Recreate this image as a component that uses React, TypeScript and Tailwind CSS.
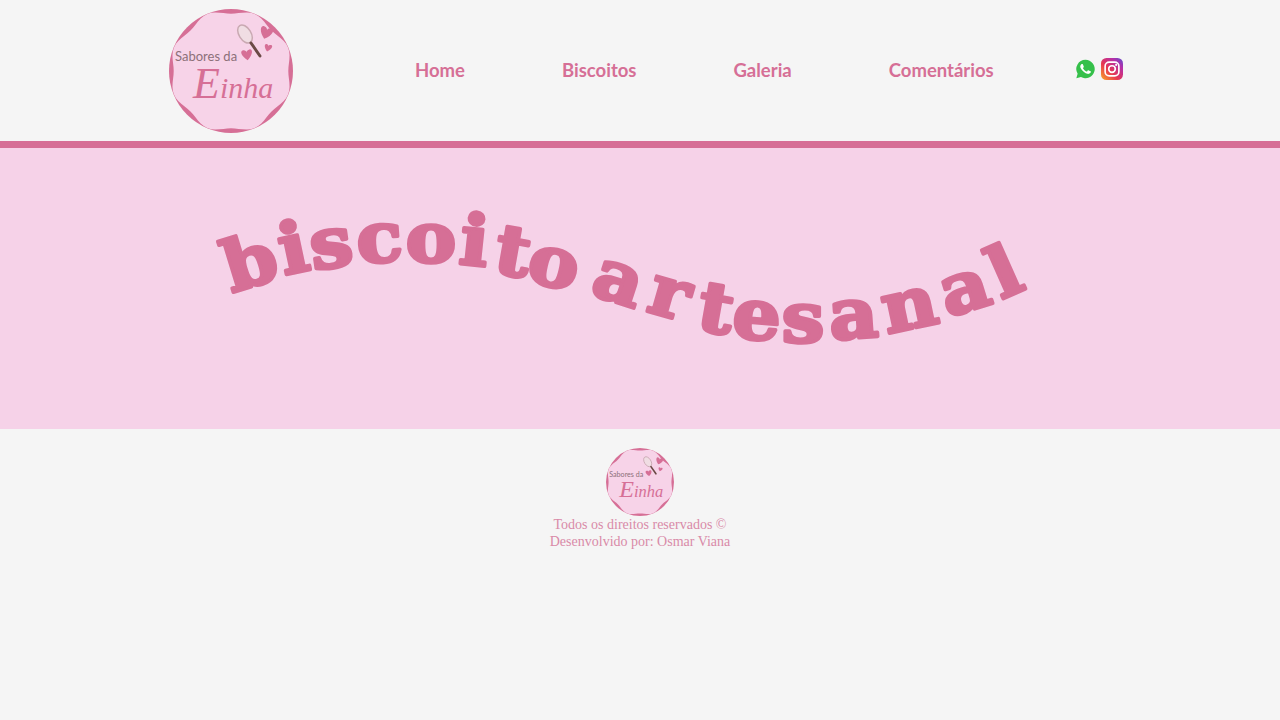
const NAV = ['Home', 'Biscoitos', 'Galeria', 'Comentários'];

// letter placement along the wave: char, x, baseline y, rotation
const LETTERS: [string, number, number, number][] = [
  ['b', 257, 285, -17],
  ['i', 298, 272, -12],
  ['s', 334, 267, -8],
  ['c', 381, 262, -4],
  ['o', 431, 262, 0],
  ['i', 472, 265, 6],
  ['t', 509, 275, 10],
  ['o', 549, 286, 13],
  ['a', 612, 301, 18],
  ['r', 664, 316, 16],
  ['t', 712, 332, 10],
  ['e', 755, 339, 5],
  ['s', 803, 342, 0],
  ['a', 855, 338, -4],
  ['n', 914, 328, -12],
  ['a', 971, 310, -17],
  ['l', 1014, 294, -24],
];

const scallop = Array.from({ length: 96 }, (_, i) => {
  const t = (i / 96) * Math.PI * 2;
  const r = 59.5 - 2.2 * Math.cos(8 * t);
  return `${(62 + r * Math.cos(t)).toFixed(2)},${(62 + r * Math.sin(t)).toFixed(2)}`;
}).join(' ');

const Heart = ({ x, y, s, r = 0 }: { x: number; y: number; s: number; r?: number }) => (
  <path
    transform={`translate(${x} ${y}) rotate(${r}) scale(${s})`}
    d="M0 4C-5 0-5-4-2.500-4-1-4 0-3 0-2 0-3 1-4 2.500-4 5-4 5 0 0 4z"
    fill="#d66f96"
  />
);

const Logo = ({ size }: { size: number }) => (
  <svg width={size} height={size} viewBox="0 0 124 124" className="block">
    <circle cx="62" cy="62" r="62" fill="#d66f96" />
    <polygon points={scallop} fill="#f7d3e8" />
    <ellipse cx="76" cy="25" rx="6" ry="10" transform="rotate(-32 76 25)" fill="#f0dde3" stroke="#c9a9b2" strokeWidth="1.500" />
    <line x1="82" y1="34" x2="91" y2="47" stroke="#6b4a46" strokeWidth="3" strokeLinecap="round" />
    <Heart x={78} y={46} s={1.300} r={-8} />
    <Heart x={97} y={24} s={1.500} r={18} />
    <Heart x={99} y={39} s={0.900} r={15} />
    <text x="6" y="52" fontFamily="'Lato', sans-serif" fontSize="13" fill="#8c7079">Sabores da</text>
    <text x="24" y="89" fontFamily="'Liberation Serif', serif" fontStyle="italic" fontSize="30" fill="#d66f96">
      <tspan fontSize="44">E</tspan>inha
    </text>
  </svg>
);

const WhatsApp = () => (
  <svg width="21" height="22" viewBox="0 0 24 24" className="block">
    <path d="M12 1.500a10.500 10.500 0 0 0-9 15.900L1.500 22.500l5.300-1.400A10.500 10.500 0 1 0 12 1.500z" fill="#35c04a" />
    <path
      fill="#fff"
      d="M17.472 14.382c-.297-.149-1.758-.867-2.030-.967-.273-.099-.471-.148-.670.150-.197.297-.767.966-.940 1.164-.173.199-.347.223-.644.075-.297-.150-1.255-.463-2.390-1.475-.883-.788-1.480-1.761-1.653-2.059-.173-.297-.018-.458.130-.606.134-.133.298-.347.446-.520.149-.174.198-.298.298-.497.099-.198.050-.371-.025-.520-.075-.149-.669-1.612-.916-2.207-.242-.579-.487-.500-.669-.510-.173-.008-.371-.010-.570-.010-.198 0-.520.074-.792.372-.272.297-1.040 1.016-1.040 2.479 0 1.462 1.065 2.875 1.213 3.074.149.198 2.096 3.200 5.077 4.487.709.306 1.262.489 1.694.625.712.227 1.360.195 1.871.118.571-.085 1.758-.719 2.006-1.413.248-.694.248-1.289.173-1.413-.074-.124-.272-.198-.570-.347"
    />
  </svg>
);

const Instagram = () => (
  <svg width="22" height="22" viewBox="0 0 24 24" className="block">
    <defs>
      <linearGradient id="ig" x1="0" y1="1" x2="1" y2="0">
        <stop offset="0" stopColor="#f9a825" />
        <stop offset="0.4" stopColor="#e8364f" />
        <stop offset="0.75" stopColor="#b52fa8" />
        <stop offset="1" stopColor="#5a4fcf" />
      </linearGradient>
    </defs>
    <rect width="24" height="24" rx="6" fill="url(#ig)" />
    <rect x="4.500" y="4.500" width="15" height="15" rx="4.500" fill="none" stroke="#fff" strokeWidth="1.800" />
    <circle cx="12" cy="12" r="3.600" fill="none" stroke="#fff" strokeWidth="1.800" />
    <circle cx="16.500" cy="7.500" r="1.100" fill="#fff" />
  </svg>
);

export default function App() {
  return (
    <div className="min-h-[720px] bg-[#f5f5f5]">
      <header className="flex h-[148px] items-center border-b-[7px] border-[#d66f96] pl-[169px]">
        <Logo size={124} />
        <nav className="ml-[122px] flex gap-[97px] font-['Lato',sans-serif] text-[18.500px] font-bold text-[#d66f96]">
          {NAV.map((item) => (
            <a key={item}>{item}</a>
          ))}
        </nav>
        <div className="ml-[81px] flex items-center gap-[5px] pb-[3px]">
          <WhatsApp />
          <Instagram />
        </div>
      </header>

      <section className="h-[281px] bg-[#f6d2e8]">
        <svg width="1280" height="281" viewBox="0 148 1280 281" className="block">
          {LETTERS.map(([ch, x, y, r], i) => (
            <text
              key={i}
              transform={`translate(${x} ${y}) rotate(${r}) scale(1.08 1)`}
              textAnchor="middle"
              fontFamily="'DejaVu Serif', serif"
              fontWeight="700"
              fontSize="70"
              fill="#d66f96"
              stroke="#d66f96"
              strokeWidth="3.500"
              strokeLinejoin="round"
            >
              {ch}
            </text>
          ))}
        </svg>
      </section>

      <footer className="flex flex-col items-center pt-[19px] font-['Liberation_Serif',serif] text-[14px] leading-[17px] text-[#d98aa8]">
        <Logo size={68} />
        <p>Todos os direitos reservados ©</p>
        <p>Desenvolvido por: Osmar Viana</p>
      </footer>
    </div>
  );
}
